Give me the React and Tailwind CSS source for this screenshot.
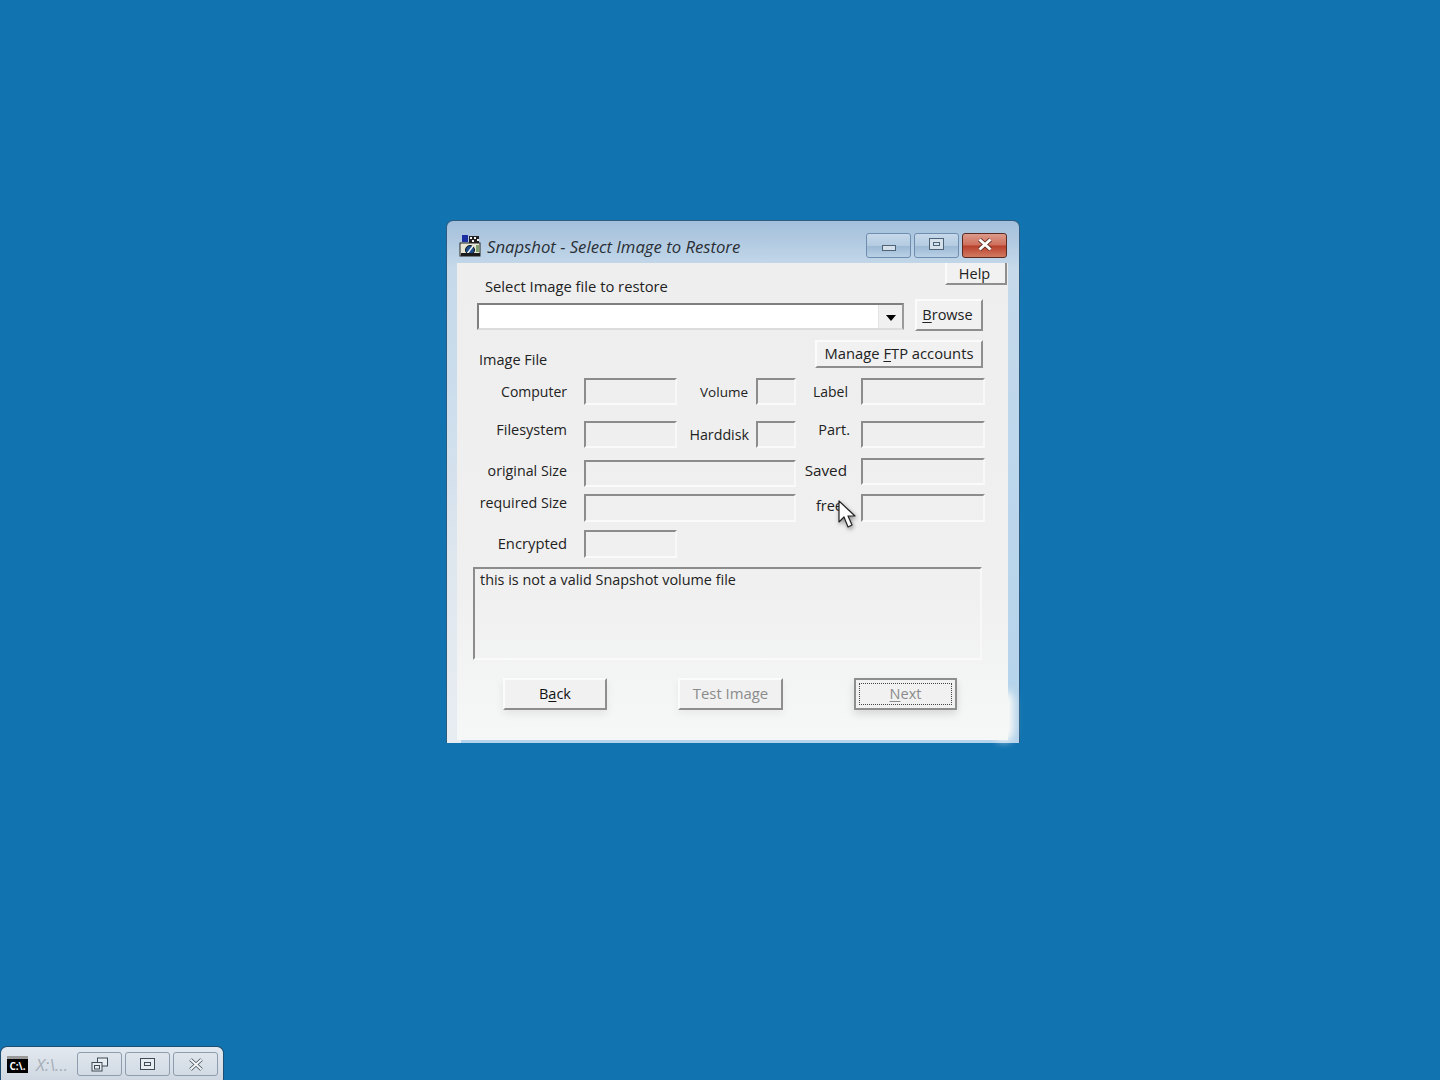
import React from 'react';

const Field = ({ className = '' }) => (
  <div className={`h-[27px] border-2 border-t-[#8c8c8c] border-l-[#8c8c8c] border-r-[#f8f8f8] border-b-[#fafafa] ${className}`} />
);

const Label = ({ children, className = '' }) => (
  <div className={`h-5 leading-5 text-right ${className}`}>{children}</div>
);

const Btn = ({ children, className = '' }) => (
  <div className={`flex items-center justify-center bg-[#f1f1f1] border-2 border-t-[#fbfbfb] border-l-[#fbfbfb] border-r-[#8e8e8e] border-b-[#8e8e8e] ${className}`}>
    {children}
  </div>
);

const AppIcon = () => (
  <svg width="22" height="22" viewBox="0 0 22 22" className="shrink-0">
    <rect x="1" y="8" width="20" height="13" fill="#e6e6d6" stroke="#222" />
    <rect x="3" y="0" width="6" height="7" fill="#1c2fa0" />
    <path d="M10 1h10v7h-10z" fill="#222" />
    <path d="M11 2h2v2h-2zM15 2h2v2h-2zM18 4h2v2h-2zM13 5h2v2h-2z" fill="#f2f2f2" />
    <circle cx="11" cy="15" r="4.5" fill="#1d4f8f" stroke="#111" />
    <path d="M8 19l6-8" stroke="#f4f4f4" strokeWidth="1.4" />
    <rect x="2" y="18" width="19" height="3" fill="#1b1b1b" />
    <rect x="17" y="10" width="3" height="7" fill="#7ea06e" />
  </svg>
);

const Cursor = () => (
  <svg width="20" height="32" viewBox="0 0 20 32" className="absolute left-[391px] top-[279px] drop-shadow-[1px_2px_2px_rgba(0,0,0,0.4)]">
    <path d="M1 1v21l5-5 4 10 4-2-4-9h7z" fill="#fff" stroke="#222" strokeWidth="1.2" strokeLinejoin="round" />
  </svg>
);

const Window = () => (
  <div className="absolute left-[446px] top-[220px] w-[574px] h-[523px] flex flex-col rounded-t-[7px] border border-[#2d5c80] border-b-0 bg-[linear-gradient(180deg,#a3bfdb_0%,#c5d9ea_9%,#bcd6ec_50%,#b4d3ec_100%)] [font-family:'Open_Sans','Noto_Sans',sans-serif] text-[14.5px] text-[#222]">
    {/* soft frame glare, left side and bottom right corner */}
    <div className="absolute left-0 top-[60px] bottom-0 w-[14px] bg-[linear-gradient(180deg,rgba(226,232,238,0)_0%,rgba(226,232,238,0.9)_60%,#e8edf2_100%)]" />
    <div className="absolute left-[548px] top-[470px] w-[18px] h-[50px] rounded-full bg-[#fffdf8] blur-[4px]" />

    {/* Title bar */}
    <div className="relative h-[42px] shrink-0 flex items-start pl-[12px] pr-[12px] pt-[14px]">
      <AppIcon />
      <span className="ml-[6px] h-6 leading-6 italic text-[16.7px] text-[#2a2f36] whitespace-nowrap">Snapshot - Select Image to Restore</span>
      <div className="ml-auto -mt-[2px] flex items-start gap-[3px]">
        <div className="w-[45px] h-[25px] flex items-end justify-center pb-[6px] rounded-[3px] border border-[#6f8eaf] bg-[linear-gradient(180deg,#c6d9ea_0%,#b4cbe1_50%,#9cb8d4_52%,#b9d1e6_100%)]">
          <div className="w-[14px] h-[6px] border border-[#4d6478] bg-[#d5e0ea]" />
        </div>
        <div className="w-[45px] h-[25px] flex items-center justify-center rounded-[3px] border border-[#6f8eaf] bg-[linear-gradient(180deg,#c6d9ea_0%,#b4cbe1_50%,#9cb8d4_52%,#b9d1e6_100%)]">
          <div className="w-[15px] h-[12px] -mt-[3px] border border-[#4d6478] bg-[#d5e0ea] flex items-center justify-center">
            <div className="w-[7px] h-[4px] border border-[#4d6478]" />
          </div>
        </div>
        <div className="w-[45px] h-[25px] flex items-center justify-center rounded-[3px] border border-[#5b2a20] bg-[linear-gradient(180deg,#dc9a8a_0%,#cf6f5c_48%,#b8402c_52%,#d27a62_100%)]">
          <svg width="16" height="13" viewBox="0 0 16 13" className="-mt-[2px]">
            <path d="M2.5 1.5l11 10M13.5 1.5l-11 10" stroke="#5c2a20" strokeWidth="4.4" />
            <path d="M2.5 1.5l11 10M13.5 1.5l-11 10" stroke="#fff" strokeWidth="3" />
          </svg>
        </div>
      </div>
    </div>

    {/* Client area */}
    <div className="relative ml-[10px] mr-[11px] h-[477px] bg-[linear-gradient(180deg,#eeeeee_0%,#f0f0f0_70%,#f6f7f7_100%)]">
      <div className="flex justify-end pr-[1px]">
        <Btn className="w-[62px] h-[22px] !border-t-0 pt-[1px] pr-[3px]">Help</Btn>
      </div>
      <div className="-mt-[9px] ml-[28px] h-5 leading-5 text-[14.75px]">Select Image file to restore</div>

      <div className="mt-[3px] flex items-start pl-[20px]">
        <div className="mt-[4px] w-[427px] h-[27px] flex justify-end bg-white border-2 border-t-[#7f7f7f] border-l-[#7f7f7f] border-r-[#9a9a9a] border-b-[#dcdcdc]">
          <div className="w-[24px] flex items-center justify-center bg-[#f0f0f0] border-l border-[#e4e4e4]">
            <div className="mt-[3px] w-0 h-0 border-x-[5px] border-x-transparent border-t-[6px] border-t-black" />
          </div>
        </div>
        <Btn className="ml-[11px] w-[68px] h-[32px] pr-[3px]"><span><u className="underline-offset-2">B</u>rowse</span></Btn>
      </div>

      <div className="mt-[9px] h-[29px] flex items-start justify-between pl-[22px] pr-[25px]">
        <div className="mt-[10px] h-5 leading-5">Image File</div>
        <Btn className="w-[168px] h-[28px] pb-[1px] text-[14.75px]"><span>Manage <u className="underline-offset-2">F</u>TP accounts</span></Btn>
      </div>

      {/* Image details */}
      <div className="mt-[9px] pl-[20px] grid grid-cols-[107px_93px_79px_40px_65px_124px] grid-rows-[43px_37px_36px_36px_28px]">
        <Label className="mt-[4px] pr-[17px] text-[14px]">Computer</Label>
        <Field />
        <Label className="mt-[4px] pr-[8px] text-[13.5px]">Volume</Label>
        <Field />
        <Label className="mt-[4px] pr-[13px] text-[14px]">Label</Label>
        <Field />

        <Label className="-mt-[1px] pr-[17px]">Filesystem</Label>
        <Field />
        <Label className="mt-[4px] pr-[7px] text-[14.25px]">Harddisk</Label>
        <Field />
        <Label className="-mt-[1px] pr-[11px]">Part.</Label>
        <Field />

        <Label className="mt-[3px] pr-[17px] text-[14.25px]">original Size</Label>
        <Field className="col-span-3 mt-[2px]" />
        <Label className="mt-[2px] pr-[14px] text-[15.25px]">Saved</Label>
        <Field />

        <Label className="-mt-[1px] pr-[17px] text-[14.25px]">required Size</Label>
        <Field className="col-span-3 h-[28px]" />
        <Label className="mt-[2px] pr-[18px]">free</Label>
        <Field className="h-[28px]" />

        <Label className="mt-[3px] pr-[17px] text-[14.75px]">Encrypted</Label>
        <Field className="h-[28px]" />
      </div>

      <div className="mt-[9px] ml-[16px] w-[509px] h-[93px] px-[5px] py-[1px] leading-5 text-[14.4px] border-2 border-t-[#8c8c8c] border-l-[#8c8c8c] border-r-[#f8f8f8] border-b-[#fafafa]">
        this is not a valid Snapshot volume file
      </div>

      <div className="mt-[18px] pl-[46px] flex items-start">
        <Btn className="w-[104px] h-[32px] shadow-[0_4px_8px_rgba(0,0,0,0.07)] text-[#111]"><span>B<u className="underline-offset-2">a</u>ck</span></Btn>
        <Btn className="ml-[71px] w-[105px] h-[32px] pb-[1px] text-[14.9px] shadow-[0_4px_8px_rgba(0,0,0,0.05)] text-[#8b8b8b]">Test Image</Btn>
        <div className="ml-[71px] w-[103px] h-[32px] p-[3px] bg-[#f1f1f1] border-2 border-[#8e8e8e] shadow-[0_4px_8px_rgba(0,0,0,0.12)] text-[#8b8b8b]">
          <div className="h-full flex items-center justify-center border border-dotted border-[#444]">
            <span><u className="underline-offset-2">N</u>ext</span>
          </div>
        </div>
      </div>
    </div>
    <Cursor />
  </div>
);

const Taskbar = () => (
  <div className="absolute left-0 bottom-0 w-[224px] h-[34px] flex items-start pl-[6px] pt-[9px] rounded-t-[7px] border border-b-0 border-[#1e4e72] bg-[linear-gradient(180deg,#e2e8ef_0%,#cfd8e2_100%)] [font-family:'Open_Sans',sans-serif]">
    <div className="w-[21px] h-[17px] bg-black border-t-[3px] border-[#999] text-white text-[10px] leading-[14px] font-bold text-center">C:\.</div>
    <span className="ml-[8px] -mt-[1px] h-5 leading-5 italic text-[17px] text-[#a6aeb6]">X:\...</span>
    <div className="absolute left-[76px] top-[5px] flex gap-[3px]">
      <div className="w-[45px] h-[24px] flex items-center justify-center rounded-[3px] border border-[#8d9dad]">
        <svg width="18" height="15" viewBox="0 0 18 15">
          <rect x="6.5" y="1" width="10" height="8" fill="#e8edf2" stroke="#3e4a55" />
          <rect x="1" y="5.5" width="10" height="8.5" fill="#e8edf2" stroke="#3e4a55" />
          <rect x="3.5" y="8.5" width="5" height="3.5" fill="none" stroke="#3e4a55" />
        </svg>
      </div>
      <div className="w-[45px] h-[24px] flex items-center justify-center rounded-[3px] border border-[#8d9dad]">
        <div className="w-[15px] h-[12px] border border-[#3e4a55] bg-[#e8edf2] flex items-center justify-center">
          <div className="w-[7px] h-[4px] border border-[#3e4a55]" />
        </div>
      </div>
      <div className="w-[45px] h-[24px] flex items-center justify-center rounded-[3px] border border-[#8d9dad]">
        <svg width="16" height="13" viewBox="0 0 16 13">
          <path d="M2.5 1.5l11 10M13.5 1.5l-11 10" stroke="#3e4a55" strokeWidth="3.6" />
          <path d="M2.5 1.5l11 10M13.5 1.5l-11 10" stroke="#f2f4f6" strokeWidth="2.2" />
        </svg>
      </div>
    </div>
  </div>
);

export default function App() {
  return (
    <div className="relative w-[1440px] h-[1080px] overflow-hidden bg-[#1173b0]">
      <Window />
      <Taskbar />
    </div>
  );
}
